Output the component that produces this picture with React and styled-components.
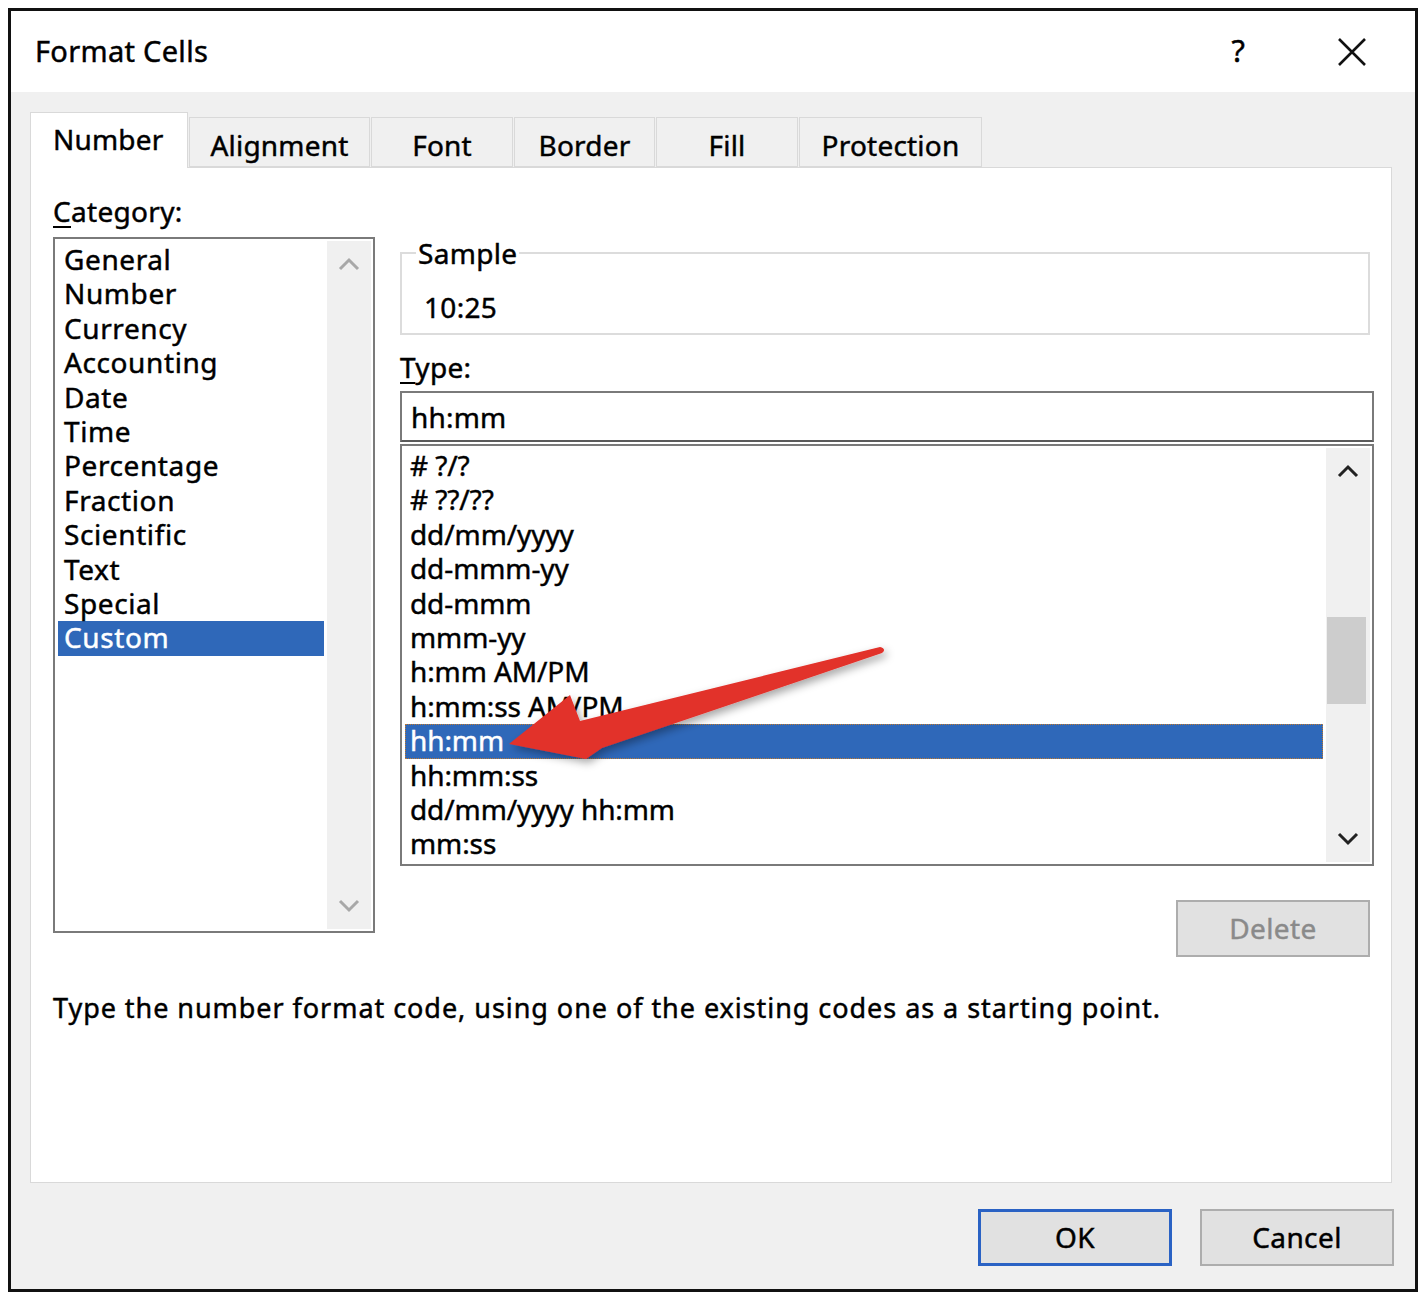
import styled, { createGlobalStyle } from "styled-components";

const GlobalStyle = createGlobalStyle`
  html, body {
    margin: 0;
    padding: 0;
    background: #ffffff;
  }
  body {
    font-family: "Noto Sans", "Open Sans", sans-serif;
    color: #000;
    -webkit-text-stroke: 0.45px currentColor;
  }
`;

const Page = styled.div`
  width: 1428px;
  height: 1301px;
  padding: 8px 10px 9px 8px;
  box-sizing: border-box;
`;

const Dialog = styled.div`
  width: 1410px;
  height: 1284px;
  border: 3px solid #111;
  box-sizing: border-box;
  display: flex;
  flex-direction: column;
  background: #f0f0f0;
`;

const TitleBar = styled.div`
  height: 81px;
  flex: none;
  background: #fff;
  display: flex;
  align-items: center;
  padding: 0 48px 0 24px;
  font-size: 29px;
`;

const Title = styled.div`
  flex: 1;
  margin-top: -2px;
  letter-spacing: 0.3px;
`;

const Help = styled.div`
  font-size: 31px;
  margin-right: 92px;
  margin-top: -4px;
`;

const Body = styled.div`
  flex: 1;
  display: flex;
  flex-direction: column;
  padding: 20px 23px 0 19px;
`;

const TabRow = styled.div`
  height: 55px;
  display: flex;
  align-items: flex-end;
  position: relative;
  z-index: 1;
`;

const Tab = styled.div`
  width: ${(p) => p.$w}px;
  height: ${(p) => (p.$active ? 56 : 50)}px;
  margin-bottom: ${(p) => (p.$active ? -1 : 0)}px;
  box-sizing: border-box;
  border: 1px solid #d9d9d9;
  border-bottom: ${(p) => (p.$active ? "none" : "1px solid #d9d9d9")};
  background: ${(p) => (p.$active ? "#fff" : "#f0f0f0")};
  display: flex;
  align-items: center;
  justify-content: ${(p) => (p.$active ? "flex-start" : "center")};
  padding-left: ${(p) => (p.$active ? 22 : 0)}px;
  padding-top: ${(p) => (p.$active ? 0 : 5)}px;
  padding-bottom: ${(p) => (p.$active ? 3 : 0)}px;
  font-size: 28px;
  letter-spacing: 0.2px;
  margin-left: ${(p) => (p.$first ? 0 : 1)}px;
`;

const Panel = styled.div`
  height: 1016px;
  box-sizing: border-box;
  background: #fff;
  border: 1px solid #d9d9d9;
  padding: 29px 17px 0 22px;
`;

const Columns = styled.div`
  display: grid;
  grid-template-columns: 322px 974px;
  column-gap: 25px;
  align-items: start;
`;

const Column = styled.div`
  display: flex;
  flex-direction: column;
`;

const Label = styled.div`
  font-size: 28px;
  height: ${(p) => p.$h}px;
  margin-top: ${(p) => p.$mt || 0}px;
  line-height: 1;
  letter-spacing: 0.3px;
  & u {
    text-decoration-thickness: 2px;
    text-underline-offset: 4px;
  }
`;

const ListBox = styled.div`
  position: relative;
  height: ${(p) => p.$h}px;
  margin-top: ${(p) => p.$mt || 0}px;
  box-sizing: border-box;
  border: 2px solid #7a7a7a;
  display: flex;
  background: #fff;
`;

const Items = styled.div`
  flex: 1;
  padding: ${(p) => p.$pt}px 3px 0 3px;
  overflow: hidden;
`;

const Item = styled.div`
  height: 34.4px;
  line-height: 33px;
  font-size: 28px;
  letter-spacing: ${(p) => p.$ls}px;
  padding-left: ${(p) => p.$pl}px;
  white-space: nowrap;
  box-sizing: border-box;
  background: ${(p) => (p.$selected ? "#2f68b9" : "transparent")};
  color: ${(p) => (p.$selected ? "#fff" : "#000")};
  outline: ${(p) => (p.$focus ? "1px dotted #c07a30" : "none")};
  outline-offset: -1px;
`;

const ScrollBar = styled.div`
  width: 44px;
  flex: none;
  margin: 2px 2px 2px 0;
  background: #f0f0f0;
  display: flex;
  flex-direction: column;
  align-items: center;
  justify-content: space-between;
  padding: 16px 0;
  box-sizing: border-box;
  position: relative;
`;

const Thumb = styled.div`
  position: absolute;
  left: 1px;
  right: 4px;
  top: ${(p) => p.$top}px;
  height: ${(p) => p.$h}px;
  background: #cdcdcd;
`;

const Sample = styled.fieldset`
  margin: 42px 4px 0 0;
  height: 96px;
  box-sizing: border-box;
  border: 2px solid #dcdcdc;
  padding: 0 0 0 22px;
  font-size: 28px;
  letter-spacing: 0.3px;
  & legend {
    padding: 0 2px;
    margin-left: -8px;
    line-height: 1;
  }
`;

const SampleValue = styled.div`
  margin-top: 21px;
`;

const TypeInput = styled.div`
  height: 51px;
  box-sizing: border-box;
  border: 2px solid #7a7a7a;
  border-bottom: 2px solid #5a5a5a;
  padding-left: 9px;
  font-size: 28px;
  letter-spacing: 0.2px;
  line-height: 48px;
`;

const ButtonRow = styled.div`
  display: flex;
  justify-content: flex-end;
  gap: ${(p) => p.$gap || 0}px;
  padding-right: ${(p) => p.$pr || 0}px;
  margin-top: ${(p) => p.$mt}px;
  margin-right: ${(p) => p.$mr || 0}px;
`;

const Button = styled.div`
  width: 194px;
  height: 57px;
  box-sizing: border-box;
  background: #e1e1e1;
  border: ${(p) => (p.$default ? "3px solid #2a62c4" : "2px solid #adadad")};
  color: ${(p) => (p.$disabled ? "#8a8a8a" : "#000")};
  font-size: 28px;
  letter-spacing: 0.4px;
  display: flex;
  align-items: center;
  justify-content: center;
  padding-bottom: 2px;
`;

const Description = styled.div`
  margin-top: 32px;
  font-size: 27px;
  letter-spacing: 0.95px;
`;

const ArrowLayer = styled.svg`
  position: absolute;
  left: 0;
  top: 0;
  pointer-events: none;
  overflow: visible;
`;

const Chevron = ({ up, color }) => (
  <svg width="22" height="14" viewBox="0 0 22 14">
    <polyline
      points={up ? "2,12 11,3 20,12" : "2,2 11,11 20,2"}
      fill="none"
      stroke={color}
      strokeWidth="3"
    />
  </svg>
);

const categories = [
  "General",
  "Number",
  "Currency",
  "Accounting",
  "Date",
  "Time",
  "Percentage",
  "Fraction",
  "Scientific",
  "Text",
  "Special",
  "Custom",
];

const types = [
  "# ?/?",
  "# ??/??",
  "dd/mm/yyyy",
  "dd-mmm-yy",
  "dd-mmm",
  "mmm-yy",
  "h:mm AM/PM",
  "h:mm:ss AM/PM",
  "hh:mm",
  "hh:mm:ss",
  "dd/mm/yyyy hh:mm",
  "mm:ss",
];

const tabs = [
  ["Number", 158],
  ["Alignment", 181],
  ["Font", 142],
  ["Border", 141],
  ["Fill", 142],
  ["Protection", 183],
];

export default function App() {
  return (
    <Page>
      <GlobalStyle />
      <Dialog>
        <TitleBar>
          <Title>Format Cells</Title>
          <Help>?</Help>
          <svg width="30" height="30" viewBox="0 0 30 30">
            <path d="M2 2 L28 28 M28 2 L2 28" stroke="#111" strokeWidth="2.6" />
          </svg>
        </TitleBar>
        <Body>
          <TabRow>
            {tabs.map(([name, w], i) => (
              <Tab key={name} $w={w} $active={i === 0} $first={i === 0}>
                {name}
              </Tab>
            ))}
          </TabRow>
          <Panel>
            <Columns>
              <Column>
                <Label $h={40}>
                  <u>C</u>ategory:
                </Label>
                <ListBox $h={696}>
                  <Items $pt={4}>
                    {categories.map((c) => (
                      <Item key={c} $pl={6} $ls={0.6} $selected={c === "Custom"}>
                        {c}
                      </Item>
                    ))}
                  </Items>
                  <ScrollBar>
                    <Chevron up color="#a8a8a8" />
                    <Chevron color="#a8a8a8" />
                  </ScrollBar>
                </ListBox>
              </Column>
              <Column>
                <Sample>
                  <legend>Sample</legend>
                  <SampleValue>10:25</SampleValue>
                </Sample>
                <Label $h={38} $mt={18}>
                  <u>T</u>ype:
                </Label>
                <TypeInput>hh:mm</TypeInput>
                <ListBox $h={422} $mt={2}>
                  <Items $pt={3}>
                    {types.map((t) => (
                      <Item
                        key={t}
                        $pl={5}
                        $ls={-0.1}
                        $selected={t === "hh:mm"}
                        $focus={t === "hh:mm"}
                      >
                        {t}
                      </Item>
                    ))}
                  </Items>
                  <ScrollBar>
                    <Thumb $top={169} $h={87} />
                    <Chevron up color="#222" />
                    <Chevron color="#222" />
                  </ScrollBar>
                  <ArrowLayer width="974" height="422">
                    <defs>
                      <filter id="sh" x="-20%" y="-50%" width="140%" height="200%">
                        <feDropShadow dx="3" dy="4" stdDeviation="4" floodColor="#000" floodOpacity="0.35" />
                      </filter>
                    </defs>
                    <path
                      d="M107 298 L168 249 L178 275 L478 201 Q485 203 480 207 L200 302 L184 313 Z"
                      fill="#e2302a"
                      filter="url(#sh)"
                    />
                  </ArrowLayer>
                </ListBox>
                <ButtonRow $pr={4} $mt={34}>
                  <Button $disabled>Delete</Button>
                </ButtonRow>
              </Column>
            </Columns>
            <Description>
              Type the number format code, using one of the existing codes as a starting point.
            </Description>
          </Panel>
          <ButtonRow $gap={28} $mt={26} $mr={-2}>
            <Button $default>OK</Button>
            <Button>Cancel</Button>
          </ButtonRow>
        </Body>
      </Dialog>
    </Page>
  );
}
